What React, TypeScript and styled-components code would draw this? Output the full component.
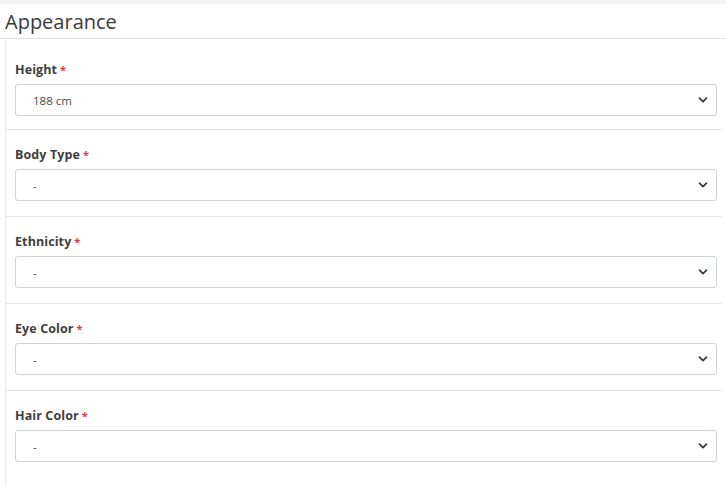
import React from "react";
import styled, { createGlobalStyle } from "styled-components";

const Global = createGlobalStyle`
  html, body { margin: 0; padding: 0; background: #ffffff; }
  body { font-family: "Open Sans", "Noto Sans", sans-serif; }
`;

const Page = styled.div`
  width: 726px;
  height: 486px;
  background: #f4f4f5;
  padding-top: 4px;
  box-sizing: border-box;
  overflow: hidden;
`;

const Card = styled.div`
  background: #ffffff;
  height: 100%;
`;

const Header = styled.div`
  border-bottom: 1px solid #e3e3e3;
  padding-left: 5px;
  display: flex;
  align-items: center;
  box-sizing: border-box;
  height: 35px;
`;

const Title = styled.h2`
  margin: 0;
  font-size: 20px;
  font-weight: 400;
  color: #3a3a3a;
  letter-spacing: 0;
  line-height: 1;
  padding-top: 2px;
`;

const Body = styled.div`
  margin-left: 5px;
  margin-right: 4px;
  border-left: 1px solid #ececec;
  height: 100%;
`;

const Section = styled.div<{ $first?: boolean; $last?: boolean }>`
  padding: ${(p) => (p.$first ? "23px 5px 13px 9px" : "17px 5px 15px 9px")};
  border-bottom: ${(p) => (p.$last ? "none" : "1px solid #e6e6e6")};
  display: flex;
  flex-direction: column;
  gap: 6px;
  box-sizing: border-box;
`;

const Label = styled.label`
  font-size: 12.5px;
  font-weight: 700;
  color: #3e3e3e;
  line-height: 16px;
  letter-spacing: 0.1px;
`;

const Req = styled.span`
  color: #d33a4a;
  margin-left: 3px;
  font-size: 11px;
`;

const SelectBox = styled.div`
  height: 32px;
  border: 1px solid #cfd2d6;
  border-radius: 3px;
  display: flex;
  align-items: center;
  justify-content: space-between;
  padding: 0 8px 0 17px;
  box-sizing: border-box;
  background: #fff;
`;

const Value = styled.span`
  font-size: 11.5px;
  color: #4a4a4a;
`;

const Chevron = () => (
  <svg width="10" height="8" viewBox="0 0 10 8">
    <path d="M1.5 2.2 L5 5.6 L8.5 2.2" fill="none" stroke="#3d3d3d" strokeWidth="1.8" strokeLinecap="round" strokeLinejoin="round" />
  </svg>
);

const fields = [
  { label: "Height", value: "188 cm" },
  { label: "Body Type", value: "-" },
  { label: "Ethnicity", value: "-" },
  { label: "Eye Color", value: "-" },
  { label: "Hair Color", value: "-" },
];

export default function App() {
  return (
    <>
      <Global />
      <Page>
        <Card>
          <Header>
            <Title>Appearance</Title>
          </Header>
          <Body>
            {fields.map((f, i) => (
              <Section key={f.label} $first={i === 0} $last={i === fields.length - 1}>
                <Label>
                  {f.label}
                  <Req>*</Req>
                </Label>
                <SelectBox>
                  <Value>{f.value}</Value>
                  <Chevron />
                </SelectBox>
              </Section>
            ))}
          </Body>
        </Card>
      </Page>
    </>
  );
}
